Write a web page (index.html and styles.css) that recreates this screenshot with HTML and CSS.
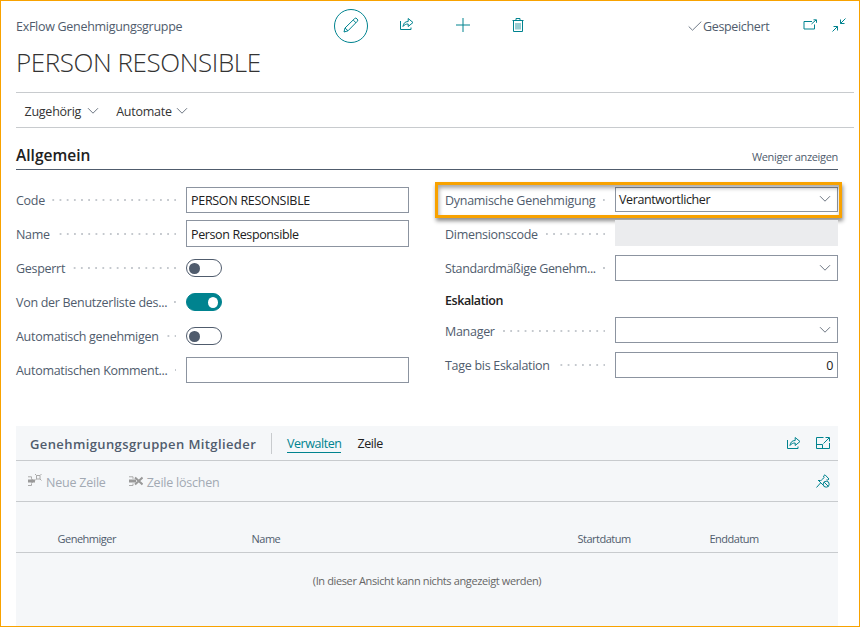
FILE: index.html
```
<!DOCTYPE html>
<html lang="de">
<head>
<meta charset="utf-8">
<title>ExFlow Genehmigungsgruppe</title>
<link rel="stylesheet" href="styles.css">
</head>
<body>
<svg class="defs" width="0" height="0">
  <symbol id="chev" viewBox="0 0 12 8"><path d="M1 1.2 6 6.2 11 1.2"/></symbol>
  <symbol id="share" viewBox="0 0 16 14"><path d="M1.5 4v8.5h10.5v-2"/><path d="M4 9.5c.4-3.200 2-5 5.200-5V1.500l4.800 4-4.800 4V7C7 7 5.300 7.600 4 9.500Z"/></symbol>
</svg>
<div class="page">
  <header class="top">
    <div class="crumb"><span class="t t-crumb">ExFlow Genehmigungsgruppe</span></div>
    <div class="actions">
      <span class="edit"><svg width="16" height="16" viewBox="0 0 16 16"><path d="M1 15l1-4L11.500 1.700a1.600 1.600 0 0 1 2.500.2 1.600 1.600 0 0 1 .2 2.500L5 13.800ZM10.200 3l2.800 2.800M2 11l3 2.800"/></svg></span>
      <svg class="a-share" width="16" height="14"><use href="#share"/></svg>
      <svg class="a-plus" width="14" height="14" viewBox="0 0 14 14"><path d="M7 0v14M0 7h14"/></svg>
      <svg class="a-trash" width="12" height="14" viewBox="0 0 12 14"><path d="M.5 2.500h11M4 2.500v-2h4v2M1.500 2.500v11h9v-11"/><path class="thin" d="M4 5v6.500M6 5v6.500M8 5v6.500"/></svg>
    </div>
    <div class="state">
      <svg class="check" width="14" height="10" viewBox="0 0 14 10"><path d="M.7 5.500 4.500 9.200 13.300.6"/></svg>
      <span class="t t-saved">Gespeichert</span>
      <svg class="pop" width="15" height="11" viewBox="0 0 15 11"><path d="M9 2.500H1v7.500h10.500V5.500M8.500 5l4.500-4M10.500.8h3v3"/></svg>
      <svg class="shrink" width="14" height="14" viewBox="0 0 14 14"><path d="M13.500.5 8.500 5.500M8.500 1.500v4h4M.5 13.500l5-5M1.500 8.500h4v4"/></svg>
    </div>
  </header>
  <h1><span class="t t-title">PERSON RESONSIBLE</span></h1>
  <nav class="menu">
    <span class="t">Zugehörig</span><svg class="chev" width="12" height="8"><use href="#chev"/></svg>
    <span class="t">Automate</span><svg class="chev" width="12" height="8"><use href="#chev"/></svg>
  </nav>
  <section class="general">
    <div class="head"><h2><span class="t">Allgemein</span></h2><span class="t less">Weniger anzeigen</span></div>
    <div class="cols">
      <div class="col left">
        <div class="row"><span class="t">Code</span><i class="dots"></i><div class="box"><span class="t">PERSON RESONSIBLE</span></div></div>
        <div class="row"><span class="t">Name</span><i class="dots"></i><div class="box tall"><span class="t v-name">Person Responsible</span></div></div>
        <div class="row"><span class="t">Gesperrt</span><i class="dots"></i><div class="ctl"><span class="toggle"></span></div></div>
        <div class="row"><span class="t">Von der Benutzerliste des...</span><i class="dots"></i><div class="ctl"><span class="toggle on"></span></div></div>
        <div class="row"><span class="t">Automatisch genehmigen</span><i class="dots"></i><div class="ctl"><span class="toggle"></span></div></div>
        <div class="row"><span class="t">Automatischen Komment...</span><i class="dots"></i><div class="box"></div></div>
      </div>
      <div class="col right">
        <div class="row marked"><span class="t">Dynamische Genehmigung</span><i class="dots"></i><div class="box sel"><span class="t v-sel">Verantwortlicher</span><svg class="chev" width="12" height="8"><use href="#chev"/></svg></div></div>
        <div class="row"><span class="t">Dimensionscode</span><i class="dots"></i><div class="box off"></div></div>
        <div class="row"><span class="t tight">Standardmäßige Genehm...</span><i class="dots"></i><div class="box sel low"><svg class="chev" width="12" height="8"><use href="#chev"/></svg></div></div>
        <h3><span class="t">Eskalation</span></h3>
        <div class="row"><span class="t">Manager</span><i class="dots"></i><div class="box sel"><svg class="chev" width="12" height="8"><use href="#chev"/></svg></div></div>
        <div class="row"><span class="t">Tage bis Eskalation</span><i class="dots"></i><div class="box num low"><span class="t">0</span></div></div>
      </div>
    </div>
  </section>
  <section class="members">
    <div class="bar">
      <h4><span class="t">Genehmigungsgruppen Mitglieder</span></h4>
      <span class="t tab active">Verwalten</span><span class="t tab">Zeile</span>
      <svg class="m-share" width="16" height="14"><use href="#share"/></svg>
      <svg class="m-exp" width="14" height="12" viewBox="0 0 14 12"><path d="M7.500.5h-7v11h13V6M.5 7.500h6v4M7.500 6.500l5.500-5.500M9.500.5h4v4"/></svg>
    </div>
    <div class="tools">
      <svg class="g" width="14" height="14" viewBox="0 0 14 14"><path class="fill" d="M0 5.500h7v3H0zM3.500 4.500l3.500 2.500-3.500 2.500z"/><path d="M0 2.800h3.500v2M0 11.500h3.500v-2M8.500 1.500h3.500v3.500H8.500zM7 0l1.500 1.500M13.500 0 12 1.500M7 6.500 8.500 5M13.500 6.500 12 5"/></svg>
      <span class="t new">Neue Zeile</span>
      <svg class="g" width="14" height="14" viewBox="0 0 14 14"><path class="fill" d="M0 5.500h7v3H0z"/><path d="M0 2.800h4v2M0 11.500h4v-2"/><path class="x" d="M6 3.500l7.500 7M13.500 3.500 6 10.500"/></svg>
      <span class="t del">Zeile löschen</span>
      <svg class="pin" width="14" height="14" viewBox="0 0 14 14"><path d="M.5 13.500 4.500 9M2 6l5.500 5.500M3 6.500C5 7 6 6 8 3.500L7.500 2 9 .8 13 5l-1.200 1-1.300-.2"/><circle cx="10.200" cy="10.200" r="3"/><path d="m8.200 8.200 4 4"/></svg>
    </div>
    <div class="cells"><span class="t">Genehmiger</span><span class="t">Name</span><span class="t">Startdatum</span><span class="t">Enddatum</span></div>
    <div class="empty"><span class="t">(In dieser Ansicht kann nichts angezeigt werden)</span></div>
  </section>
</div>
</body>
</html>
```
FILE: styles.css
```
*, *::before, *::after { box-sizing: border-box; }
body { margin: 0; background: #fff; font-family: "Open Sans", "Noto Sans", sans-serif; font-size: 12.5px; letter-spacing: -0.29px; color: #505c6d; }
h1, h2, h3, h4 { margin: 0; font: inherit; }
.t { white-space: nowrap; }
svg { display: block; flex: none; fill: none; stroke: #00838f; stroke-width: 1; }
.defs { position: absolute; }
.page { width: 860px; height: 627px; border: 1px solid #f8a200; padding: 0 5px 0 15px; overflow: hidden; display: flex; flex-direction: column; }
.top { height: 50px; display: flex; align-items: center; flex: none; }
.crumb { width: 318px; }
.actions { display: flex; align-items: center; width: 354px; }
.edit { width: 34px; height: 34px; border: 1px solid #00838f; border-radius: 50%; display: flex; align-items: center; justify-content: center; }
.edit svg { margin-bottom: 2px; }
.a-share { margin: 0 0 4px 31px; }
.a-plus { margin: 0 0 2px 41px; }
.a-trash { margin: 0 0 2px 42px; }
.thin { stroke-width: .8; }
.state { display: flex; align-items: center; }
.check { stroke: #707a88; }
.t-saved { margin-left: 1px; width: 100px; letter-spacing: -0.35px; }
.pop { margin-bottom: 4px; }
.shrink { margin: 0 0 2px 14px; }
h1 { height: 41px; flex: none; font-size: 26px; font-weight: 300; line-height: 23px; color: #333; letter-spacing: -0.43px; }
.menu { height: 36px; flex: none; border-top: 1px solid #c8cbce; border-bottom: 1px solid #c8cbce; display: flex; align-items: center; padding: 2px 0 0 8.500px; color: #333; letter-spacing: -0.25px; }
.chev { stroke: #6e7783; }
.menu .chev { margin: 0 17px 0 6px; }
.menu .chev:last-child { margin-left: 4.500px; }
.general { width: 822px; }
.head { height: 42px; border-bottom: 1px solid #505c6d; display: flex; justify-content: space-between; padding-top: 15px; }
h2 { font-size: 15.500px; font-weight: 600; line-height: 24px; color: #212121; letter-spacing: 0; }
.less { font-size: 11px; line-height: 28px; letter-spacing: -0.32px; }
.cols { display: flex; justify-content: space-between; padding-top: 13px; }
.col { width: 393px; }
.row { height: 34px; display: flex; align-items: center; position: relative; }
.dots { flex: 1; height: 2px; margin: 0 10px 0 7px; background: linear-gradient(90deg, transparent 5.400px, #c5c9ce 5.400px) right center / 7.180px 2px repeat-x; }
.box { width: 223px; height: 26px; border: 1px solid #8c94a0; display: flex; align-items: center; padding: 1px 4px 0; color: #212121; flex: none; }
.tall { height: 27px; }
.v-name { letter-spacing: -0.38px; }
.tight { letter-spacing: -0.37px; }
.left .box { margin-top: -1px; }
.ctl { width: 223px; }
.toggle { display: flex; align-items: center; width: 36px; height: 18px; border: 1px solid #505c6d; border-radius: 9px; padding: 0 3px 0 2px; }
.toggle::before { content: ""; width: 10.500px; height: 11px; border-radius: 50%; background: #505c6d; }
.toggle.on { background: #00838f; border-color: #00838f; justify-content: flex-end; }
.toggle.on::before { background: #fff; }
.right .box { margin-top: -2px; }
.right .box.low { margin-top: 0; }
.box.sel { justify-content: flex-end; padding: 0 6px 0 3px; }
.v-sel { margin-right: auto; letter-spacing: -0.4px; }
.marked .box { height: 25px; }
.marked::after { content: ""; position: absolute; left: -10px; top: -1px; width: 407px; height: 36px; border: 3px solid #f8a200; box-shadow: 1px 3px 4px rgba(0,0,0,.45), inset 1px 3px 4px rgba(0,0,0,.35); }
.off { background: #ebecee; border-color: #ebecee; }
h3 { height: 29px; line-height: 31px; font-weight: 600; font-size: 12.500px; color: #212121; letter-spacing: -0.42px; }
.num { justify-content: flex-end; }
.members { width: 822px; margin-top: 39px; background: #f5f7f9; flex: 1; }
.bar { height: 35px; border-bottom: 1px solid #c8cbce; display: flex; align-items: center; padding: 1px 0 0 14px; }
h4 { width: 242px; height: 21px; line-height: 22px; font-weight: 600; font-size: 13px; letter-spacing: .39px; border-right: 1px solid #c8cbce; margin-right: 15px; }
.tab { color: #212121; margin-right: 16px; line-height: 16px; padding-top: 2px; border-bottom: 1px solid transparent; letter-spacing: -0.45px; }
.active { color: #00838f; border-color: #00838f; }
.m-share { margin: 0 14px 2px auto; }
.m-exp { margin: 0 8px 2px 0; }
.tools { height: 41px; border-bottom: 1px solid #c8cbce; display: flex; align-items: center; padding: 0 8px 0 12px; color: #a2a9b3; letter-spacing: -0.22px; }
.tools .t { padding-top: 3px; }
.tools .g { stroke: #aaa; margin-right: 4px; }
.tools .fill { fill: #999; stroke: none; }
.tools .x { stroke: #999; stroke-width: 2; }
.new { margin-right: 23px; }
.pin { margin-left: auto; }
.cells { height: 51px; border-bottom: 1px solid #c8cbce; display: grid; grid-template-columns: 194px 326px 132px 1fr; align-items: end; padding: 0 0 5px 41.500px; font-size: 11px; line-height: 16px; letter-spacing: -0.5px; }
.empty { padding-top: 20px; text-align: center; font-size: 11px; line-height: 16px; color: #666; letter-spacing: -0.38px; }
```
